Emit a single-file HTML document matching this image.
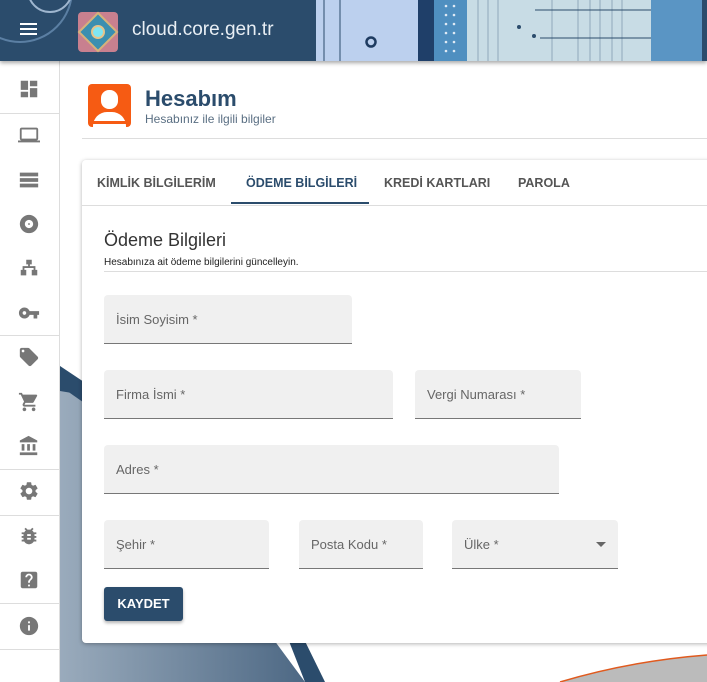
<!DOCTYPE html>
<html><head><meta charset="utf-8"><style>
*{box-sizing:border-box;margin:0;padding:0}
body{width:707px;height:682px;overflow:hidden;font-family:"Liberation Sans",sans-serif;background:#fff;position:relative}
.hdr{position:absolute;left:0;top:0;width:707px;height:61px;background:#2b4c6c;box-shadow:0 2px 4px rgba(0,0,0,.35);z-index:5;overflow:hidden}
.side{position:absolute;left:0;top:61px;width:60px;height:621px;border-right:1px solid #ddd;background:#fff;z-index:3}
.sep{position:absolute;left:0;width:59px;height:1px;background:#ddd}
.ic{position:absolute;left:18px;width:22px;height:22px}
.card{position:absolute;left:82px;top:160px;width:640px;height:483px;background:#fff;border-radius:4px;box-shadow:0 1px 4px rgba(0,0,0,.3);z-index:2}
.tab{position:absolute;top:16px;font-size:12.5px;font-weight:bold;color:#555}
.fld{position:absolute;height:49px;background:#f0f0f0;border-radius:4px 4px 0 0;border-bottom:1px solid #777;font-size:13px;color:#666;padding:17px 0 0 12px}
</style></head><body>
<svg style="position:absolute;left:60px;top:61px" width="647" height="621">
<defs><linearGradient id="g" x1="0" x2="1"><stop offset="0" stop-color="#9aabbc"/><stop offset="1" stop-color="#4d6884"/></linearGradient></defs>
<polygon points="0,305 0,621 245,621 200,560 50,370" fill="url(#g)"/>
<polygon points="0,305 30,325 60,340 0,330" fill="#2b4c6c"/>
<polygon points="0,308 45,340 50,360 0,325" fill="#2b4c6c"/>
<polygon points="225,570 245,621 265,621 240,570" fill="#2b4c6c"/>
<path d="M500,621 Q570,600 647,594 L647,621Z" fill="#bbb"/>
<path d="M500,621 Q570,600 647,594" stroke="#e05a1e" stroke-width="1.5" fill="none"/>
</svg>
<div class="hdr">
<svg width="707" height="61" style="position:absolute;left:0;top:0">
<circle cx="20" cy="-10" r="52" fill="none" stroke="#5b7fa3" stroke-width="2"/>
<circle cx="50" cy="-10" r="22" fill="none" stroke="#9fb6cf" stroke-width="2"/>
<rect x="316" y="0" width="102" height="61" fill="#bcd0ee"/>
<line x1="324" y1="0" x2="324" y2="61" stroke="#2b4c6c"/><line x1="340" y1="0" x2="340" y2="61" stroke="#2b4c6c"/>
<circle cx="371" cy="42" r="4.5" fill="none" stroke="#1e3b60" stroke-width="2.5"/>
<rect x="418" y="0" width="16" height="61" fill="#1f3f69"/>
<rect x="434" y="0" width="33" height="61" fill="#4f8fc0"/>
<g fill="#dfeaf5"><circle cx="446" cy="6" r="1.3"/><circle cx="454" cy="6" r="1.3"/><circle cx="446" cy="15" r="1.3"/><circle cx="454" cy="15" r="1.3"/><circle cx="446" cy="24" r="1.3"/><circle cx="454" cy="24" r="1.3"/><circle cx="446" cy="33" r="1.3"/><circle cx="454" cy="33" r="1.3"/><circle cx="446" cy="42" r="1.3"/><circle cx="454" cy="42" r="1.3"/><circle cx="446" cy="51" r="1.3"/><circle cx="454" cy="51" r="1.3"/></g>
<rect x="467" y="0" width="184" height="61" fill="#c8dce5"/>
<g stroke="#8fa9bb" stroke-width="1"><line x1="478" y1="0" x2="478" y2="61"/><line x1="488" y1="0" x2="488" y2="61"/><line x1="498" y1="0" x2="498" y2="61"/><line x1="552" y1="0" x2="552" y2="61"/><line x1="578" y1="0" x2="578" y2="61"/><line x1="590" y1="0" x2="590" y2="61"/><line x1="600" y1="0" x2="600" y2="61"/><line x1="612" y1="0" x2="612" y2="61"/><line x1="622" y1="0" x2="622" y2="61"/></g>
<line x1="535" y1="10" x2="665" y2="10" stroke="#2b4c6c"/><line x1="540" y1="38" x2="665" y2="38" stroke="#2b4c6c"/>
<circle cx="519" cy="27" r="2" fill="#2b4c6c"/><circle cx="534" cy="36" r="2" fill="#2b4c6c"/>
<rect x="651" y="0" width="51" height="61" fill="#5a95c4"/>
<rect x="702" y="0" width="5" height="61" fill="#2b4c6c"/>
<rect x="78" y="12" width="40" height="40" rx="4" fill="#c8808f"/>
<polygon points="98,13 117,32 98,51 79,32" fill="#3b8fb0" stroke="#d6b27a" stroke-width="2"/>
<circle cx="98" cy="32" r="6" fill="#7fe6f2" stroke="#e6c48a" stroke-width="2"/>
</svg>
<div style="position:absolute;left:20px;top:23px;width:17px;height:2px;background:#fff;box-shadow:0 5px 0 #fff,0 10px 0 #fff"></div>
<div style="position:absolute;left:132px;top:19px;font-size:19px;color:#e8eef4">cloud.core.gen.tr</div>
</div>
<div class="side">
<div class="sep" style="top:52px"></div><div class="sep" style="top:274px"></div><div class="sep" style="top:408px"></div><div class="sep" style="top:454px"></div><div class="sep" style="top:542px"></div><div class="sep" style="top:588px"></div>
<svg class="ic" style="top:17px" viewBox="0 0 24 24" fill="#777"><path d="M3 13h8V3H3zm0 8h8v-6H3zm10 0h8V11h-8zm0-18v6h8V3z"/></svg>
<svg class="ic" style="top:63px" viewBox="0 0 24 24" fill="#777"><path d="M20 18c1.1 0 2-.9 2-2V6c0-1.1-.9-2-2-2H4c-1.1 0-2 .9-2 2v10c0 1.1.9 2 2 2H0v2h24v-2zM4 6h16v10H4z"/></svg>
<svg class="ic" style="top:108px" viewBox="0 0 24 24" fill="#777"><path d="M2 20h20v-4H2zm0-16v4h20V4zm0 10h20v-4H2z"/></svg>
<svg class="ic" style="top:152px" viewBox="0 0 24 24" fill="#777"><path d="M12 2C6.5 2 2 6.5 2 12s4.5 10 10 10 10-4.5 10-10S17.5 2 12 2zm0 14.5c-2.5 0-4.5-2-4.5-4.5s2-4.5 4.5-4.5 4.5 2 4.5 4.5-2 4.5-4.5 4.5zm0-5.5c-.6 0-1 .4-1 1s.4 1 1 1 1-.4 1-1-.4-1-1-1z"/></svg>
<svg class="ic" style="top:196px" viewBox="0 0 24 24" fill="#777"><path d="M9 3h6v5h-2v2h6v4h2v6h-6v-6h2v-2H7v2h2v6H3v-6h2v-4h6V8H9z"/></svg>
<svg class="ic" style="top:241px" viewBox="0 0 24 24" fill="#777"><path d="M12.65 10C11.830 7.67 9.61 6 7 6c-3.31 0-6 2.69-6 6s2.690 6 6 6c2.61 0 4.83-1.67 5.65-4H17v4h4v-4h2v-4zM7 14c-1.1 0-2-.9-2-2s.9-2 2-2 2 .9 2 2-.9 2-2 2z"/></svg>
<svg class="ic" style="top:285px" viewBox="0 0 24 24" fill="#777"><path d="M21.4 11.6l-9-9C12.05 2.25 11.55 2 11 2H4c-1.1 0-2 .9-2 2v7c0 .55.22 1.05.59 1.42l9 9c.36.36.86.58 1.41.58.55 0 1.05-.22 1.41-.59l7-7c.37-.36.59-.86.59-1.41 0-.55-.23-1.06-.6-1.4zM5.5 7C4.67 7 4 6.33 4 5.5S4.67 4 5.5 4 7 4.67 7 5.5 6.330 7 5.5 7z"/></svg>
<svg class="ic" style="top:330px" viewBox="0 0 24 24" fill="#777"><path d="M7 18c-1.1 0-2 .9-2 2s.9 2 2 2 2-.9 2-2-.9-2-2-2zM1 2v2h2l3.6 7.6L5.2 14c-.1.3-.2.6-.2 1 0 1.1.9 2 2 2h12v-2H7.4c-.1 0-.2-.1-.2-.2v-.1l.9-1.7h7.4c.8 0 1.4-.4 1.7-1l3.6-6.5c.1-.2.1-.3.1-.5 0-.6-.4-1-1-1H5.2l-.9-2zm16 16c-1.1 0-2 .9-2 2s.9 2 2 2 2-.9 2-2-.9-2-2-2z"/></svg>
<svg class="ic" style="top:374px" viewBox="0 0 24 24" fill="#777"><path d="M4 10v7h3v-7zm6 0v7h3v-7zM2 22h19v-3H2zm14-12v7h3v-7zM11.5 1L2 6v2h19V6z"/></svg>
<svg class="ic" style="top:419px" viewBox="0 0 24 24" fill="#777"><path d="M19.14 12.94c.04-.3.06-.61.06-.94 0-.32-.02-.64-.07-.94l2.03-1.58c.18-.14.23-.41.12-.61l-1.92-3.32c-.12-.22-.37-.29-.59-.22l-2.39.96c-.5-.38-1.03-.7-1.62-.94l-.36-2.54c-.04-.24-.24-.41-.48-.41h-3.84c-.24 0-.43.17-.47.41l-.36 2.54c-.59.24-1.13.57-1.62.94l-2.39-.96c-.22-.08-.47 0-.59.22L2.74 8.87c-.12.21-.08.47.12.61l2.03 1.58c-.05.3-.09.63-.09.94s.02.64.07.94l-2.03 1.58c-.18.14-.23.41-.12.61l1.920 3.32c.12.22.37.29.59.22l2.39-.96c.5.38 1.03.7 1.62.94l.36 2.54c.05.24.24.41.48.41h3.84c.24 0 .44-.17.47-.41l.36-2.54c.59-.24 1.13-.56 1.62-.94l2.39.96c.22.08.47 0 .59-.22l1.92-3.32c.12-.22.07-.47-.12-.61zM12 15.6c-1.98 0-3.6-1.62-3.6-3.6s1.62-3.6 3.6-3.6 3.6 1.62 3.6 3.6-1.62 3.6-3.6 3.6z"/></svg>
<svg class="ic" style="top:464px" viewBox="0 0 24 24" fill="#777"><path d="M20 8h-2.81c-.45-.78-1.07-1.45-1.82-1.96L17 4.41 15.59 3l-2.17 2.17C12.96 5.06 12.49 5 12 5s-.96.06-1.41.17L8.41 3 7 4.41l1.62 1.63C7.88 6.55 7.26 7.22 6.81 8H4v2h2.09c-.05.33-.09.66-.09 1v1H4v2h2v1c0 .34.04.67.09 1H4v2h2.81c1.04 1.79 2.97 3 5.19 3s4.15-1.21 5.19-3H20v-2h-2.09c.05-.33.09-.66.09-1v-1h2v-2h-2v-1c0-.34-.04-.67-.09-1H20zm-6 8h-4v-2h4zm0-4h-4v-2h4z"/></svg>
<svg class="ic" style="top:508px" viewBox="0 0 24 24" fill="#777"><path d="M19 3H5c-1.1 0-2 .9-2 2v14c0 1.1.9 2 2 2h14c1.1 0 2-.9 2-2V5c0-1.1-.9-2-2-2zm-6 16h-2v-2h2zm2.07-7.75l-.9.92C13.45 12.9 13 13.5 13 15h-2v-.5c0-1.1.45-2.1 1.17-2.83l1.24-1.26c.37-.36.59-.86.59-1.41 0-1.1-.9-2-2-2s-2 .9-2 2H8c0-2.21 1.79-4 4-4s4 1.79 4 4c0 .88-.36 1.68-.93 2.25z"/></svg>
<svg class="ic" style="top:554px" viewBox="0 0 24 24" fill="#777"><path d="M12 2C6.48 2 2 6.48 2 12s4.48 10 10 10 10-4.48 10-10S17.52 2 12 2zm1 15h-2v-6h2zm0-8h-2V7h2z"/></svg>
</div>
<div style="position:absolute;left:88px;top:84px;width:43px;height:43px;background:#f65b13;border-radius:4px;overflow:hidden">
<div style="position:absolute;left:13px;top:6px;width:17px;height:19px;background:#fff;border-radius:8px"></div>
<div style="position:absolute;left:5px;top:28px;width:33px;height:20px;background:#fff;border-radius:14px 14px 0 0"></div>
<div style="position:absolute;left:5px;top:37px;width:33px;height:3px;background:#f65b13"></div>
</div>
<div style="position:absolute;left:145px;top:86px;font-size:22px;font-weight:bold;color:#2b4c6c">Hesabım</div>
<div style="position:absolute;left:145px;top:112px;font-size:12px;color:#5a6f83">Hesabınız ile ilgili bilgiler</div>
<div style="position:absolute;left:82px;top:138px;width:625px;height:1px;background:#ddd"></div>
<div class="card">
<div class="tab" style="left:15px">KİMLİK BİLGİLERİM</div>
<div class="tab" style="left:164px;color:#2b4c6c">ÖDEME BİLGİLERİ</div>
<div class="tab" style="left:302px">KREDİ KARTLARI</div>
<div class="tab" style="left:436px">PAROLA</div>
<div style="position:absolute;left:149px;top:42px;width:138px;height:2px;background:#2b4c6c"></div>
<div style="position:absolute;left:0;top:45px;width:640px;height:1px;background:#ddd"></div>
<div style="position:absolute;left:22px;top:70px;font-size:18px;color:#333">Ödeme Bilgileri</div>
<div style="position:absolute;left:22px;top:97px;font-size:10px;color:#222">Hesabınıza ait ödeme bilgilerini güncelleyin.</div>
<div style="position:absolute;left:22px;top:111px;width:618px;height:1px;background:#ddd"></div>
<div class="fld" style="left:22px;top:135px;width:248px">İsim Soyisim *</div>
<div class="fld" style="left:22px;top:210px;width:289px">Firma İsmi *</div>
<div class="fld" style="left:333px;top:210px;width:166px">Vergi Numarası *</div>
<div class="fld" style="left:22px;top:285px;width:455px">Adres *</div>
<div class="fld" style="left:22px;top:360px;width:165px">Şehir *</div>
<div class="fld" style="left:217px;top:360px;width:124px">Posta Kodu *</div>
<div class="fld" style="left:370px;top:360px;width:166px">Ülke *<span style="position:absolute;right:12px;top:22px;border:5px solid transparent;border-top-color:#666;border-bottom:0"></span></div>
<div style="position:absolute;left:22px;top:427px;width:79px;height:34px;background:#2b4c6c;border-radius:3px;color:#fff;font-size:13px;font-weight:bold;text-align:center;line-height:34px;box-shadow:0 2px 3px rgba(0,0,0,.3)">KAYDET</div>
</div>
</body></html>
